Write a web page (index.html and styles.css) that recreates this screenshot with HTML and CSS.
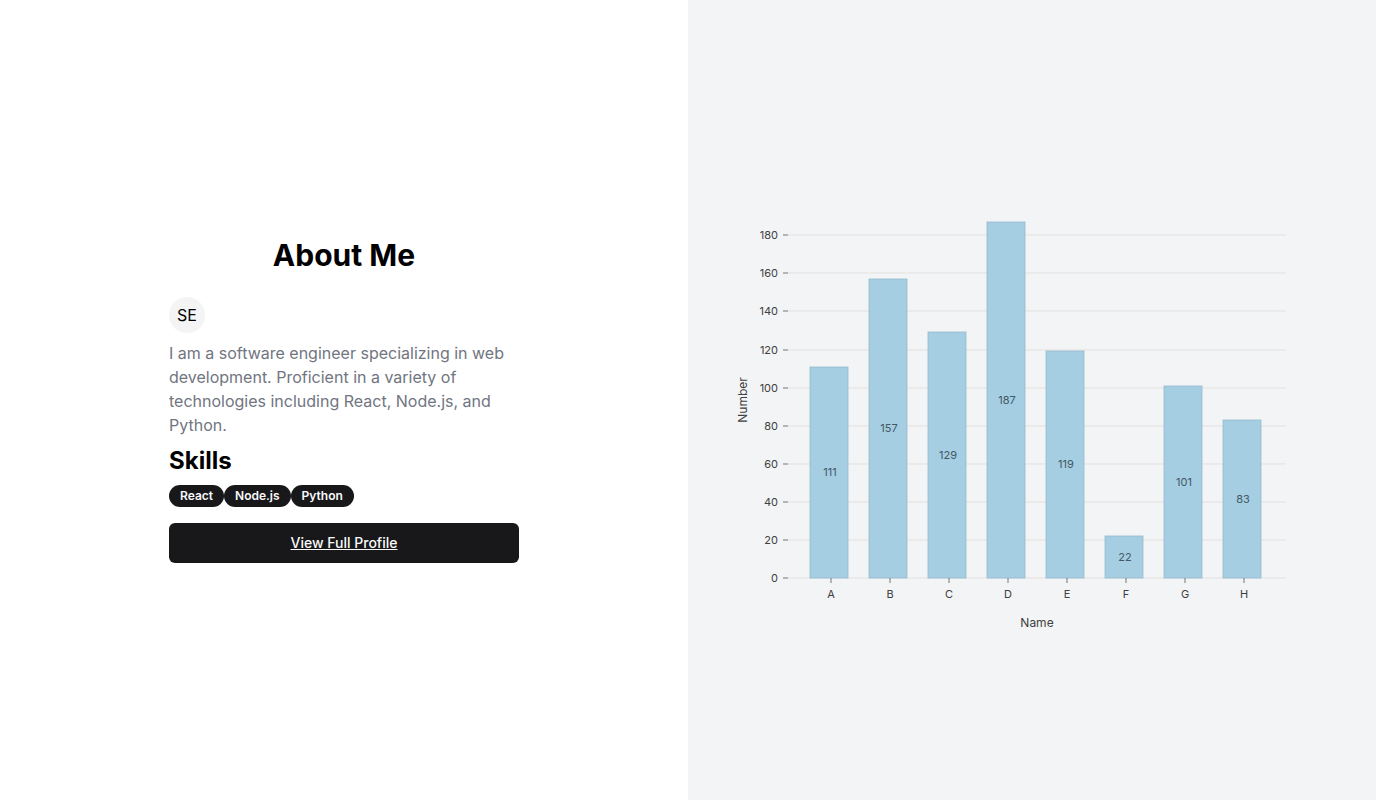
FILE: index.html
```html
<!DOCTYPE html>
<html lang="en">
<head>
<meta charset="utf-8">
<meta name="viewport" content="width=device-width, initial-scale=1">
<title>About Me</title>
<link rel="stylesheet" href="styles.css">
</head>
<body>
<main class="layout">
  <section class="about">
    <div class="profile">
      <h1 class="title">About Me</h1>
      <div class="bio">
        <span class="avatar">SE</span>
        <p class="summary">I am a software engineer specializing in web development. Proficient in a variety of technologies including React, Node.js, and Python.</p>
        <h2 class="subtitle">Skills</h2>
        <ul class="skills">
          <li class="badge">React</li>
          <li class="badge">Node.js</li>
          <li class="badge">Python</li>
        </ul>
      </div>
      <a class="button" href="#">View Full Profile</a>
    </div>
  </section>
  <section class="panel">
    <svg class="chart" viewBox="0 0 608 456" role="img" aria-label="Number by name">
      <g transform="translate(60 50)">
        <path class="grid" d="M0 13H498M0 51H498M0 89H498M0 128H498M0 166H498M0 204H498M0 242H498M0 280H498M0 318H498M0 356H498"/>
        <g class="bars">
          <rect x="22" y="145" width="38" height="211"/>
          <rect x="81" y="57" width="38" height="299"/>
          <rect x="140" y="110" width="38" height="246"/>
          <rect x="199" y="0" width="38" height="356"/>
          <rect x="258" y="129" width="38" height="227"/>
          <rect x="317" y="314" width="38" height="42"/>
          <rect x="376" y="164" width="38" height="192"/>
          <rect x="435" y="198" width="38" height="158"/>
        </g>
        <path class="ticks" d="M-5 13H0M-5 51H0M-5 89H0M-5 128H0M-5 166H0M-5 204H0M-5 242H0M-5 280H0M-5 318H0M-5 356H0M43 356V361M102 356V361M161 356V361M220 356V361M279 356V361M338 356V361M397 356V361M456 356V361"/>
        <g class="values">
          <text x="42" y="254">111</text>
          <text x="101" y="210">157</text>
          <text x="160" y="237">129</text>
          <text x="219" y="182">187</text>
          <text x="278" y="246">119</text>
          <text x="337" y="339">22</text>
          <text x="396" y="264">101</text>
          <text x="455" y="281">83</text>
        </g>
        <g class="labels-y">
          <text x="-10" y="17">180</text>
          <text x="-10" y="55">160</text>
          <text x="-10" y="93">140</text>
          <text x="-10" y="132">120</text>
          <text x="-10" y="170">100</text>
          <text x="-10" y="208">80</text>
          <text x="-10" y="246">60</text>
          <text x="-10" y="284">40</text>
          <text x="-10" y="322">20</text>
          <text x="-10" y="360">0</text>
        </g>
        <g class="labels-x">
          <text x="43" y="376">A</text>
          <text x="102" y="376">B</text>
          <text x="161" y="376">C</text>
          <text x="220" y="376">D</text>
          <text x="279" y="376">E</text>
          <text x="338" y="376">F</text>
          <text x="397" y="376">G</text>
          <text x="456" y="376">H</text>
        </g>
        <text class="axis-name" x="249" y="405">Name</text>
        <text class="axis-name" transform="translate(-41 178) rotate(-90)">Number</text>
      </g>
    </svg>
  </section>
</main>
</body>
</html>
```

FILE: styles.css
```css
* {
  box-sizing: border-box;
  margin: 0;
}

body {
  font-family: Inter, "Liberation Sans", sans-serif;
  font-size: 16px;
  line-height: 24px;
  color: #000;
  background: #fff;
}

.layout {
  display: grid;
  grid-template-columns: 1fr 1fr;
  min-height: 100vh;
}

.about,
.panel {
  display: flex;
  align-items: center;
  justify-content: center;
}

.profile {
  display: grid;
  gap: 24px;
  width: 100%;
  max-width: 350px;
}

.title {
  font-size: 30px;
  line-height: 36px;
  font-weight: 700;
  text-align: center;
}

.bio {
  display: grid;
  gap: 8px;
}

.avatar {
  display: flex;
  align-items: center;
  justify-content: center;
  width: 36px;
  height: 36px;
  border-radius: 50%;
  background: #f4f4f5;
}

.summary {
  color: #71757f;
}

.subtitle {
  font-size: 24px;
  line-height: 32px;
  font-weight: 700;
}

.skills {
  display: flex;
  padding: 0;
  list-style: none;
}

.badge {
  padding: 3px 11px;
  border-radius: 11px;
  font-size: 12px;
  line-height: 16px;
  font-weight: 600;
  color: #fafafa;
  background: #18181b;
}

.button {
  display: flex;
  align-items: center;
  justify-content: center;
  height: 40px;
  margin-top: -8px;
  border-radius: 6px;
  font-size: 14px;
  line-height: 20px;
  font-weight: 500;
  color: #fafafa;
  background: #18181b;
}

.panel {
  padding: 40px;
  background: #f3f4f6;
}

.chart {
  display: block;
  width: 100%;
  overflow: visible;
  font-size: 11px;
  fill: #404040;
}

.grid {
  stroke: #ddd;
  stroke-opacity: 0.8;
}

.bars {
  fill: #a6cee3;
  stroke: #95b9cc;
  stroke-opacity: 0.8;
}

.ticks {
  stroke: #777;
}

.values {
  fill: #425864;
  text-anchor: middle;
}

.labels-y {
  text-anchor: end;
}

.labels-x {
  text-anchor: middle;
}

.axis-name {
  font-size: 12px;
  text-anchor: middle;
}
```
